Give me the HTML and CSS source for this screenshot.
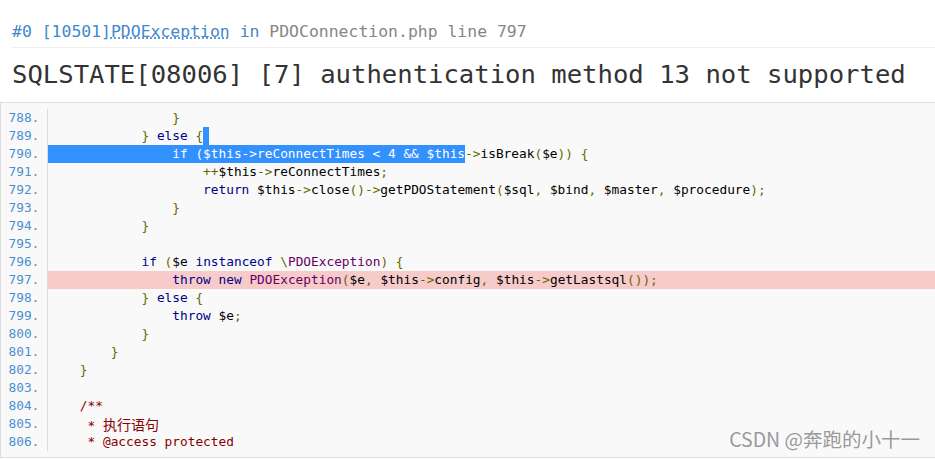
FILE: index.html
```html
<!DOCTYPE html>
<html lang="en">

<head>
    <meta charset="UTF-8">
    <meta name="viewport" content="width=device-width, initial-scale=1.0">
    <title>System Error</title>
    <link rel="stylesheet" href="styles.css">
</head>

<body>
    <div class="exception">
        <div class="message">
            <div class="info">
                <h2>#0 [10501]<abbr title="think\db\exception\PDOException">PDOException</abbr> in <a class="toggle">PDOConnection.php line 797</a></h2>
                <h1>SQLSTATE[08006] [7] authentication method 13 not supported</h1>
            </div>
        </div>
        <div class="source-code">
            <pre class="prettyprint"><ol start="788">
<li><code>                <span class="pun">}</span></code></li>
<li><code>            <span class="pun">}</span> <span class="kwd">else</span> <span class="pun">{</span><span class="sel nl"></span></code></li>
<li class="line-sel"><code><span class="sel">                if ($this-&gt;reConnectTimes &lt; 4 &amp;&amp; $this</span><span class="pun">-&gt;</span>isBreak<span class="pun">(</span>$e<span class="pun">))</span> <span class="pun">{</span></code></li>
<li><code>                    <span class="pun">++</span>$this<span class="pun">-&gt;</span>reConnectTimes<span class="pun">;</span></code></li>
<li><code>                    <span class="kwd">return</span> $this<span class="pun">-&gt;</span>close<span class="pun">()-&gt;</span>getPDOStatement<span class="pun">(</span>$sql<span class="pun">,</span> $bind<span class="pun">,</span> $master<span class="pun">,</span> $procedure<span class="pun">);</span></code></li>
<li><code>                <span class="pun">}</span></code></li>
<li><code>            <span class="pun">}</span></code></li>
<li><code> </code></li>
<li><code>            <span class="kwd">if</span> <span class="pun">(</span>$e <span class="kwd">instanceof</span> <span class="pun">\</span><span class="typ">PDOException</span><span class="pun">)</span> <span class="pun">{</span></code></li>
<li class="line-error"><code>                <span class="kwd">throw</span> <span class="kwd">new</span> <span class="typ">PDOException</span><span class="pun">(</span>$e<span class="pun">,</span> $this<span class="pun">-&gt;</span>config<span class="pun">,</span> $this<span class="pun">-&gt;</span>getLastsql<span class="pun">());</span></code></li>
<li><code>            <span class="pun">}</span> <span class="kwd">else</span> <span class="pun">{</span></code></li>
<li><code>                <span class="kwd">throw</span> $e<span class="pun">;</span></code></li>
<li><code>            <span class="pun">}</span></code></li>
<li><code>        <span class="pun">}</span></code></li>
<li><code>    <span class="pun">}</span></code></li>
<li><code> </code></li>
<li><code>    <span class="com">/**</span></code></li>
<li><code>     <span class="com">* <span class="cjk">执行语句</span></span></code></li>
<li><code>     <span class="com">* @access protected</span></code></li>
</ol></pre>
        </div>
    </div>

    <div class="watermark">CSDN @奔跑的小十一</div>
</body>

</html>
```

FILE: styles.css
```css
body {
    margin: 0;
    overflow: hidden;
    background: #fff;
    color: #333;
}

.exception {
    width: 1100px;
}

.message {
    padding: 14px 12px 12px 12px;
}

h2 {
    margin: 0;
    padding: 6px 0 4px;
    line-height: 23px;
    font-size: 16.45px;
    font-weight: 400;
    color: #4288ce;
    font-family: "DejaVu Sans Mono", monospace;
    border-bottom: 1px solid #eee;
}

abbr {
    text-decoration: underline dotted;
}

a.toggle {
    color: #868686;
}

h1 {
    margin: 10px 0 0;
    font-size: 25.6px;
    font-weight: 400;
    line-height: 32px;
    color: #333;
    font-family: "DejaVu Sans Mono", monospace;
}

.source-code {
    padding: 6px;
    border: 1px solid #ddd;
    background: #f9f9f9;
}

.source-code pre {
    margin: 0;
}

.source-code ol {
    margin: 0;
    padding-left: 40px;
    white-space: normal;
    color: #4a8fd2;
    font-size: 12.8px;
    font-family: "DejaVu Sans Mono", monospace;
}

.source-code li {
    height: 18px;
    line-height: 18px;
    border-left: 1px solid #ddd;
}

.source-code code {
    display: inline-block;
    height: 100%;
    vertical-align: top;
    padding-left: 1px;
    white-space: pre;
    color: #000;
    font-size: 12.8px;
    font-family: "DejaVu Sans Mono", "Noto Sans CJK SC", monospace;
}

.source-code li.line-error {
    background: #f8cbcb;
}

.sel {
    display: inline-block;
    height: 18px;
    vertical-align: top;
    background: #3390ff;
    color: #fff;
}

.line-sel .sel {
    margin-left: -1px;
    padding-left: 1px;
}

.sel.nl {
    width: 6px;
}

.pun { color: #660; }
.kwd { color: #008; }
.typ { color: #606; }
.com { color: #800; }

.cjk {
    font-size: 14px;
    font-family: "Noto Sans CJK SC", sans-serif;
}

.watermark {
    position: absolute;
    top: 429px;
    right: 15px;
    font-size: 19.5px;
    line-height: 20px;
    color: #9a9a9a;
    font-family: "Noto Sans CJK SC", sans-serif;
}
```
